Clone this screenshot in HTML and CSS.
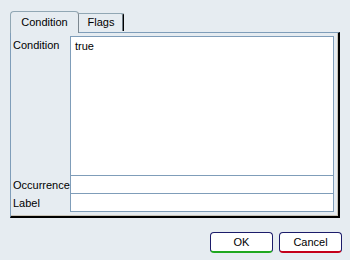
FILE: index.html
```html
<!DOCTYPE html>
<html lang="en">
<head>
  <meta charset="UTF-8" />
  <title>Condition</title>
  <link rel="stylesheet" href="styles.css">
</head>
<body>
  <div class="dialog">
    <div class="tabs">
      <div class="tab active">Condition</div>
      <div class="tab">Flags</div>
    </div>

    <div class="panel">
      <label class="field-label">Condition</label>
      <textarea class="field area">true</textarea>

      <label class="field-label">Occurrence</label>
      <input class="field" type="text" />

      <label class="field-label">Label</label>
      <input class="field" type="text" />
    </div>

    <div class="buttons">
      <button class="btn ok">OK</button>
      <button class="btn cancel">Cancel</button>
    </div>
  </div>
</body>
</html>
```

FILE: styles.css
```css
body {
  margin: 0;
  background-color: #e6ecf1;
  color: #000;
  font-family: "Liberation Sans", Arial, sans-serif;
  font-size: 11px;
}

.dialog {
  width: 350px;
  height: 260px;
  padding-top: 11px;
  box-sizing: border-box;
}

.tabs {
  display: flex;
  align-items: flex-start;
  padding-left: 10px;
  height: 21px;
}

.tab {
  box-sizing: border-box;
  width: 45px;
  height: 18px;
  margin-top: 2px;
  padding-top: 2px;
  text-align: center;
  border: 1px solid #91a7b4;
  border-bottom: none;
  border-left: none;
  border-right: 1px solid #000;
  box-shadow: inset -1px 0 0 #6d7a84;
  border-radius: 0 2px 0 0;
  background-color: #e6ecf1;
}

.tab.active {
  width: 69px;
  height: 22px;
  margin-top: 0;
  padding-top: 4px;
  border-left: 1px solid #91a7b4;
  border-right: 1px solid #7d8890;
  box-shadow: none;
  border-radius: 4px 4px 0 0;
  position: relative;
  z-index: 1;
}

.panel {
  margin: 0 10px 0 10px;
  height: 186px;
  box-sizing: border-box;
  border: 1px solid #7f9db9;
  border-right: 2px solid #000;
  border-bottom: 2px solid #000;
  box-shadow: inset -1px -1px 0 #c9c4b8;
  padding: 3px 4px 4px 2px;
  display: grid;
  grid-template-columns: 57px 1fr;
  grid-template-rows: 1fr 18px 18px;
}

.field-label {
  padding-top: 3px;
  white-space: nowrap;
}

.field {
  box-sizing: border-box;
  margin: 0;
  border: 1px solid #7f9db9;
  background-color: #fff;
  font-family: inherit;
  font-size: 11px;
  padding: 2px 4px;
  outline: none;
}

.field + .field-label + .field {
  border-top: none;
}

.area {
  resize: none;
  overflow: hidden;
  padding: 3px 4px;
}

.buttons {
  display: flex;
  justify-content: flex-end;
  gap: 6px;
  padding: 14px 8px 0 0;
}

.btn {
  width: 63px;
  height: 21px;
  background-color: #fff;
  border: 1px solid #1c1c6a;
  border-radius: 4px;
  font-family: inherit;
  font-size: 11px;
  color: #000;
  padding: 0;
}

.btn.ok {
  border-bottom: 2px solid #20a820;
}

.btn.cancel {
  border-bottom: 2px solid #c4001a;
}
```
